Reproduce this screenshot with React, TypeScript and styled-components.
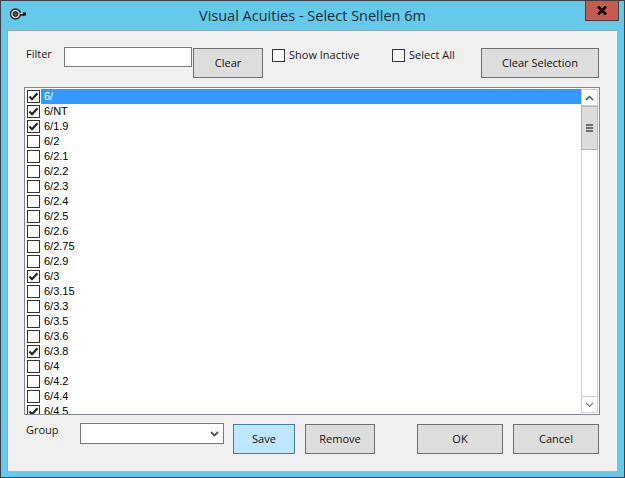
import React from "react";
import styled, { createGlobalStyle } from "styled-components";

const GlobalStyle = createGlobalStyle`
  html, body {
    margin: 0;
    padding: 0;
    overflow: hidden;
    background: #65c9ea;
  }
`;

const Win = styled.div`
  box-sizing: border-box;
  width: 625px;
  height: 478px;
  border: 1px solid #3c4146;
  background: #65c9ea;
  display: flex;
  flex-direction: column;
  font-family: "Liberation Sans", Arial, sans-serif;
  font-size: 11px;
  color: #000;
`;

const TitleBar = styled.div`
  height: 29px;
  flex: none;
  display: grid;
  grid-template-columns: 1fr auto 1fr;
  align-items: start;
`;

const AppIcon = styled.svg`
  margin: 6px 0 0 9px;
  display: block;
`;

const Title = styled.div`
  font-family: "Open Sans", sans-serif;
  font-size: 14.5px;
  line-height: 30px;
  color: #1c2b36;
`;

const CloseBox = styled.div`
  justify-self: end;
  box-sizing: border-box;
  width: 34px;
  height: 21px;
  margin: -1px 5px 0 0;
  background: #c75b50;
  border: 1px solid #45403f;
  display: flex;
  align-items: center;
  justify-content: center;
`;

const Client = styled.div`
  box-sizing: border-box;
  width: 610px;
  height: 441px;
  margin-left: 6px;
  background: #f0f0f0;
  border: solid #8ea9b8;
  border-width: 1px 0 0 1px;
  display: flex;
  flex-direction: column;
`;

const TopRow = styled.div`
  display: flex;
  align-items: flex-start;
  height: 56px;
  padding: 16px 0 0 18px;
  box-sizing: border-box;
`;

const FieldLabel = styled.div<{ $width: number; $top?: number }>`
  width: ${(p) => p.$width}px;
  flex: none;
  margin-top: ${(p) => p.$top ?? 0}px;
  font-family: "Open Sans", sans-serif;
  font-size: 11px;
  line-height: 14px;
  color: #1a1a1a;
`;

const TextInput = styled.div`
  box-sizing: border-box;
  width: 128px;
  height: 20px;
  background: #fff;
  border: 1px solid #7a7a7a;
  flex: none;
`;

const Btn = styled.div<{ $width: number; $left?: number; $top?: number; $hot?: boolean }>`
  box-sizing: border-box;
  flex: none;
  width: ${(p) => p.$width}px;
  height: 30px;
  padding-bottom: 2px;
  margin-left: ${(p) => p.$left ?? 0}px;
  margin-top: ${(p) => p.$top ?? 0}px;
  background: ${(p) => (p.$hot ? "#bee6fd" : "#dddddd")};
  border: 1px solid ${(p) => (p.$hot ? "#3c7fb1" : "#707070")};
  display: flex;
  align-items: center;
  justify-content: center;
  font-family: "Open Sans", sans-serif;
  font-size: 11px;
  color: #111;
`;

const CheckLabel = styled.label<{ $left: number; $width: number }>`
  display: flex;
  align-items: flex-start;
  flex: none;
  margin-left: ${(p) => p.$left}px;
  margin-top: 2px;
  width: ${(p) => p.$width}px;
  font-family: "Open Sans", sans-serif;
  font-size: 11px;
  line-height: 11px;
  color: #1a1a1a;
`;

const Box = styled.span`
  box-sizing: border-box;
  width: 13px;
  height: 13px;
  flex: none;
  background: #fff;
  border: 1px solid #333;
  display: flex;
  align-items: center;
  justify-content: center;
  margin-right: 4px;
`;

const ListPanel = styled.div`
  box-sizing: border-box;
  width: 576px;
  height: 328px;
  margin-left: 16px;
  background: #fff;
  border: 1px solid #828790;
  display: flex;
  overflow: hidden;
`;

const Items = styled.div`
  flex: 1;
  min-width: 0;
  padding: 1px 0 0 2px;
  overflow: hidden;
`;

const Item = styled.div`
  display: flex;
  align-items: center;
  height: 15px;
`;

const ItemBox = styled(Box)`
  margin-right: 1px;
`;

const ItemText = styled.div<{ $selected: boolean }>`
  flex: 1;
  height: 15px;
  line-height: 14px;
  padding-left: 3px;
  background: ${(p) => (p.$selected ? "#3399ff" : "transparent")};
  color: ${(p) => (p.$selected ? "#fff" : "#000")};
`;

const ScrollBar = styled.div`
  width: 17px;
  margin: 1px 1px 1px 0;
  flex: none;
  display: flex;
  flex-direction: column;
  background: #fff;
`;

const ScrollArrow = styled.div`
  box-sizing: border-box;
  width: 17px;
  height: 17px;
  background: #fff;
  border: 1px solid #d0d0d0;
  display: flex;
  align-items: center;
  justify-content: center;
`;

const Thumb = styled.div`
  box-sizing: border-box;
  width: 17px;
  height: 44px;
  background: #dcdcdc;
  border: 1px solid #b5b5b5;
  display: flex;
  align-items: center;
  justify-content: center;
`;

const Track = styled.div`
  flex: 1;
  border: solid #d0d0d0;
  border-width: 0 1px;
`;

const BottomRow = styled.div`
  display: flex;
  align-items: flex-start;
  padding: 9px 0 0 18px;
`;

const Combo = styled.div`
  box-sizing: border-box;
  width: 144px;
  height: 21px;
  margin-top: -1px;
  background: #fff;
  border: 1px solid #7a7a7a;
  display: flex;
  align-items: center;
  justify-content: flex-end;
  padding-right: 4px;
  flex: none;
`;

const acuities: [string, boolean][] = [
  ["6/", true],
  ["6/NT", true],
  ["6/1.9", true],
  ["6/2", false],
  ["6/2.1", false],
  ["6/2.2", false],
  ["6/2.3", false],
  ["6/2.4", false],
  ["6/2.5", false],
  ["6/2.6", false],
  ["6/2.75", false],
  ["6/2.9", false],
  ["6/3", true],
  ["6/3.15", false],
  ["6/3.3", false],
  ["6/3.5", false],
  ["6/3.6", false],
  ["6/3.8", true],
  ["6/4", false],
  ["6/4.2", false],
  ["6/4.4", false],
  ["6/4.5", true],
];

const Tick = () => (
  <svg width="11" height="11" viewBox="0 0 11 11">
    <path d="M1.5 5.5 L4 8.2 L9.5 2.2" fill="none" stroke="#222" strokeWidth="2.2" />
  </svg>
);

const App = () => {
  return (
    <>
      <GlobalStyle />
      <Win>
        <TitleBar>
          <AppIcon width="18" height="14" viewBox="0 0 18 14">
            <circle cx="5.5" cy="7" r="5" fill="#ddd" stroke="#222" strokeWidth="1.4" />
            <circle cx="5.5" cy="7" r="2.4" fill="#555" stroke="#111" strokeWidth="1" />
            <rect x="10" y="6" width="4" height="1" fill="#fff" />
            <rect x="13" y="5.5" width="3" height="3" fill="#000" />
            <rect x="10" y="7" width="4" height="1.5" fill="#000" />
          </AppIcon>
          <Title>Visual Acuities - Select Snellen 6m</Title>
          <CloseBox>
            <svg width="10" height="9" viewBox="0 0 10 9">
              <path d="M1 0.5 L9 8.5 M9 0.5 L1 8.5" stroke="#000" strokeWidth="2.6" />
            </svg>
          </CloseBox>
        </TitleBar>
        <Client>
          <TopRow>
            <FieldLabel $width={38}>Filter</FieldLabel>
            <TextInput />
            <Btn $width={70} $left={1} $top={1}>Clear</Btn>
            <CheckLabel $left={9} $width={120}>
              <Box />
              Show Inactive
            </CheckLabel>
            <CheckLabel $left={0} $width={89}>
              <Box />
              Select All
            </CheckLabel>
            <Btn $width={118} $top={1}>Clear Selection</Btn>
          </TopRow>
          <ListPanel>
            <Items>
              {acuities.map(([name, checked], i) => (
                <Item key={name}>
                  <ItemBox>{checked && <Tick />}</ItemBox>
                  <ItemText $selected={i === 0}>{name}</ItemText>
                </Item>
              ))}
            </Items>
            <ScrollBar>
              <ScrollArrow>
                <svg width="9" height="6" viewBox="0 0 9 6">
                  <path d="M1 5 L4.5 1.5 L8 5" fill="none" stroke="#444" strokeWidth="1.4" />
                </svg>
              </ScrollArrow>
              <Thumb>
                <svg width="7" height="8" viewBox="0 0 7 8">
                  <path d="M0 0 H7 V2 H0 Z M0 3 H7 V5 H0 Z M0 6 H7 V8 H0 Z" fill="#6e6e6e" />
                </svg>
              </Thumb>
              <Track />
              <ScrollArrow>
                <svg width="9" height="6" viewBox="0 0 9 6">
                  <path d="M1 1 L4.5 4.5 L8 1" fill="none" stroke="#777" strokeWidth="1.1" />
                </svg>
              </ScrollArrow>
            </ScrollBar>
          </ListPanel>
          <BottomRow>
            <FieldLabel $width={54} $top={-1}>Group</FieldLabel>
            <Combo>
              <svg width="9" height="6" viewBox="0 0 9 6">
                <path d="M1 1 L4.5 4.5 L8 1" fill="none" stroke="#555" strokeWidth="1.8" />
              </svg>
            </Combo>
            <Btn $width={62} $left={9} $hot>Save</Btn>
            <Btn $width={70} $left={10}>Remove</Btn>
            <Btn $width={86} $left={42}>OK</Btn>
            <Btn $width={86} $left={10}>Cancel</Btn>
          </BottomRow>
        </Client>
      </Win>
    </>
  );
};

export default App;
